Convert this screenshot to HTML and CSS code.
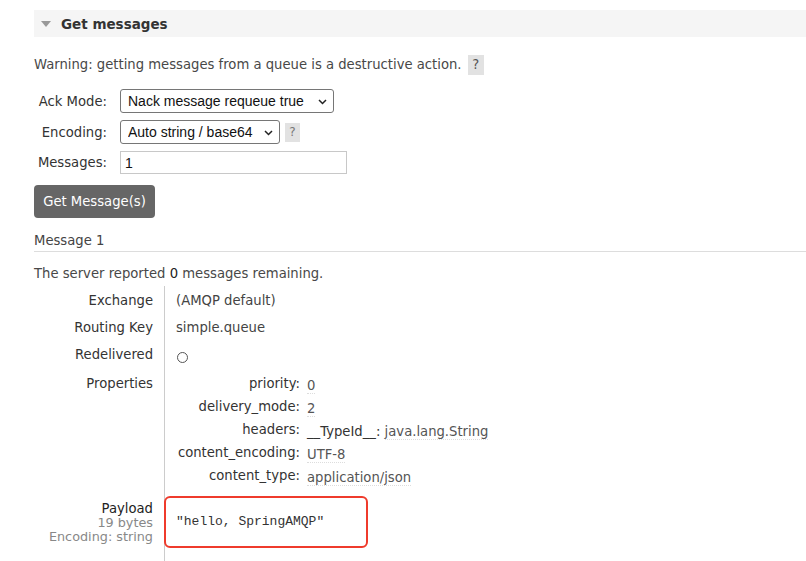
FILE: index.html
```html
<!DOCTYPE html>
<html>
<head>
<meta charset="utf-8">
<link rel="stylesheet" href="styles.css">
</head>
<body>
<div class="page">
  <div class="section-head">
    <span class="tri"></span>
    <span class="section-title">Get messages</span>
  </div>
  <p class="warning">Warning: getting messages from a queue is a destructive action. <span class="help">?</span></p>
  <div class="form">
    <div class="frow">
      <label class="flabel">Ack Mode:</label>
      <span class="selwrap">
        <select class="sel sel-ack"><option>Nack message requeue true</option></select>
        <svg class="chev" width="9" height="6" viewBox="0 0 9 6"><path d="M1 1 L4.5 4.5 L8 1" fill="none" stroke="#222" stroke-width="1.5"/></svg>
      </span>
    </div>
    <div class="frow">
      <label class="flabel">Encoding:</label>
      <span class="selwrap">
        <select class="sel sel-enc"><option>Auto string / base64</option></select>
        <svg class="chev" width="9" height="6" viewBox="0 0 9 6"><path d="M1 1 L4.5 4.5 L8 1" fill="none" stroke="#222" stroke-width="1.5"/></svg>
      </span>
      <span class="help help-sm">?</span>
    </div>
    <div class="frow">
      <label class="flabel">Messages:</label>
      <input class="inp" type="text" value="1">
    </div>
  </div>
  <button class="btn">Get Message(s)</button>
  <div class="msg-head">Message 1</div>
  <p class="remaining">The server reported <b class="num">0</b> messages remaining.</p>
  <div class="details">
    <div class="k k-first">Exchange</div><div class="v v-first">(AMQP default)</div>
    <div class="k">Routing Key</div><div class="v">simple.queue</div>
    <div class="k">Redelivered</div><div class="v"><span class="circle"></span></div>
    <div class="k k-props">Properties</div>
    <div class="v v-props">
      <div class="props">
        <div class="pk">priority:</div><div class="pv"><span class="u">0</span></div>
        <div class="pk">delivery_mode:</div><div class="pv"><span class="u">2</span></div>
        <div class="pk">headers:</div><div class="pv"><span class="hk">__TypeId__:</span> <span class="u">java.lang.String</span></div>
        <div class="pk">content_encoding:</div><div class="pv"><span class="u">UTF-8</span></div>
        <div class="pk">content_type:</div><div class="pv"><span class="u">application/json</span></div>
      </div>
    </div>
    <div class="k k-payload"><div class="pl-main">Payload</div><div class="sub">19 bytes</div><div class="sub">Encoding: string</div></div>
    <div class="v v-payload"><div class="payload-box"><pre class="payload">"hello, SpringAMQP"</pre></div></div>
  </div>
</div>
</body>
</html>
```

FILE: styles.css
```css
html, body {
  margin: 0;
  padding: 0;
  background: #fff;
}
body {
  font-family: "DejaVu Sans", Verdana, sans-serif;
  font-size: 13.2px;
  color: #484848;
  height: 561px;
  overflow: hidden;
}
.page {
  padding: 10px 0 0 34px;
}
.section-head {
  height: 27px;
  background: #f5f5f5;
  display: flex;
  align-items: center;
}
.tri {
  width: 0;
  height: 0;
  margin-left: 7px;
  border-left: 5px solid transparent;
  border-right: 5px solid transparent;
  border-top: 6px solid #999;
}
.section-title {
  margin-left: 10px;
  font-weight: bold;
  color: #333;
  font-size: 13.5px;
}
.warning {
  margin: 18px 0 0 0;
  height: 20px;
  line-height: 20px;
}
.help {
  display: inline-block;
  width: 16px;
  height: 20px;
  line-height: 20px;
  text-align: center;
  background: #e2e2e2;
  color: #555;
  vertical-align: top;
  margin-left: 2px;
}
.form {
  margin-top: 14px;
  display: flex;
  flex-direction: column;
  gap: 7px;
}
.frow {
  display: flex;
  align-items: center;
}
.flabel {
  width: 73px;
  text-align: right;
  margin-right: 13px;
  color: #333;
  white-space: nowrap;
}
.selwrap {
  position: relative;
  display: inline-block;
  height: 24px;
}
.sel {
  -webkit-appearance: none;
  appearance: none;
  font-family: "Liberation Sans", Arial, sans-serif;
  font-size: 14px;
  color: #111;
  height: 24px;
  border: 1px solid #767676;
  border-radius: 3px;
  background: #fff;
  padding: 0 2px 0 7px;
  margin: 0;
  display: block;
}
.chev {
  position: absolute;
  right: 7px;
  top: 10px;
  pointer-events: none;
}
.sel-ack { width: 214px; }
.sel-enc { width: 160px; }
.help-sm {
  height: 19px;
  line-height: 19px;
  width: 15px;
  margin-left: 5px;
  color: #777;
  font-size: 12px;
}
.inp {
  font-family: "Liberation Sans", Arial, sans-serif;
  font-size: 14px;
  width: 227px;
  height: 23px;
  box-sizing: border-box;
  border: 1px solid #c8c8c8;
  padding: 0 4px;
  margin: 0;
  color: #111;
}
.btn {
  display: block;
  margin-top: 11px;
  width: 121px;
  height: 33px;
  background: #666;
  color: #fff;
  border: 0;
  border-radius: 4px;
  font-family: "DejaVu Sans", Verdana, sans-serif;
  font-size: 13.2px;
  padding: 0;
}
.msg-head {
  margin-top: 15px;
  padding-bottom: 3px;
  border-bottom: 1px solid #ddd;
  color: #444;
  line-height: 15px;
}
.remaining {
  margin: 14px 0 0 0;
  line-height: 16px;
}
.num { font-weight: normal; color: #222; }
.details {
  display: grid;
  grid-template-columns: 119px 1fr;
  column-gap: 11px;
  margin-top: 4px;
}
.k {
  text-align: right;
  color: #333;
  padding-top: 7px;
  height: 20px;
  line-height: 16px;
  white-space: nowrap;
}
.v {
  border-left: 1px solid #ccc;
  padding-left: 11px;
  padding-top: 7px;
  height: 20px;
  line-height: 16px;
  color: #444;
}
.k-props { padding-top: 9px; height: auto; }
.v-props { height: auto; padding-top: 7px; }
.circle {
  display: inline-block;
  width: 9px;
  height: 9px;
  border: 1px solid #555;
  border-radius: 50%;
  margin-top: 5px;
  margin-left: 1px;
}
.props {
  display: grid;
  grid-template-columns: 124px auto;
  column-gap: 7px;
  row-gap: 3px;
  justify-content: start;
}
.pk {
  text-align: right;
  color: #333;
  line-height: 16px;
  padding-top: 2px;
  white-space: nowrap;
}
.pv {
  line-height: 16px;
  padding-top: 4px;
  color: #555;
  white-space: nowrap;
}
.u {
  border-bottom: 1px dotted #ddd;
}
.hk { color: #333; }
.k-payload {
  height: auto;
  padding-top: 16px;
}
.pl-main { color: #222; line-height: 14px; }
.sub { color: #888; font-size: 12.8px; line-height: 13.6px; }
.v-payload {
  height: auto;
  padding-top: 10px;
  padding-left: 0;
  border-left: 1px solid #ccc;
  min-height: 80px;
}
.payload-box {
  width: 200px;
  height: 48px;
  border: 2px solid #ef3b2c;
  border-radius: 6px;
  margin-left: -1px;
  display: flex;
  align-items: center;
}
.payload {
  margin: 0 0 0 10px;
  font-family: "Liberation Mono", "Courier New", monospace;
  font-size: 13px;
  color: #333;
}
```
